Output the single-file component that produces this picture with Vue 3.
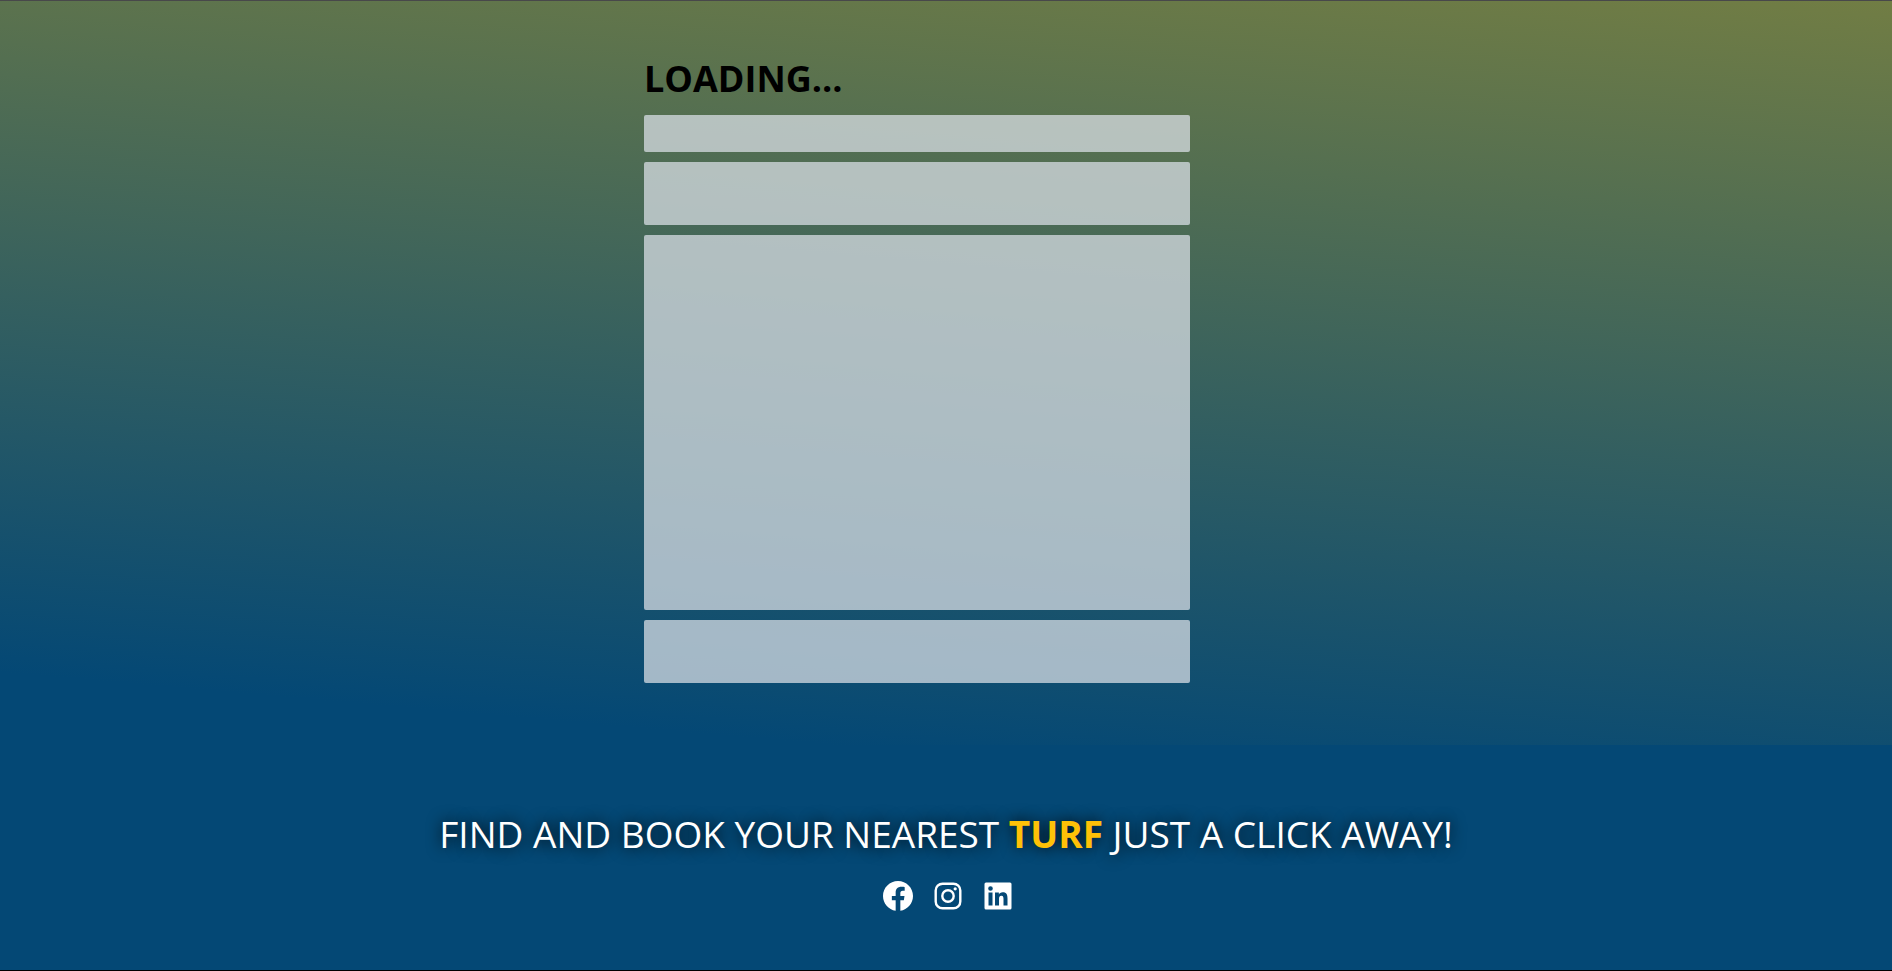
<script setup>
const blocks = ['title', 'field', 'picture', 'field']
</script>

<template>
  <div class="page">
    <main class="hero">
      <section class="loader" aria-busy="true">
        <h1>LOADING...</h1>
        <div v-for="(kind, i) in blocks" :key="i" class="block" :class="kind"></div>
      </section>
    </main>
    <footer class="footer">
      <p class="tagline">FIND AND BOOK YOUR NEAREST <strong>TURF</strong> JUST A CLICK AWAY!</p>
      <nav class="social" aria-label="Social media">
        <a href="#facebook" aria-label="Facebook">
          <svg viewBox="0 0 24 24"><path d="M12.001 2.002c-5.522 0-9.999 4.477-9.999 9.999 0 4.99 3.656 9.126 8.437 9.879v-6.988h-2.54v-2.891h2.54V9.798c0-2.508 1.493-3.891 3.776-3.891 1.094 0 2.24.195 2.24.195v2.459h-1.264c-1.24 0-1.628.772-1.628 1.563v1.875h2.771l-.443 2.891h-2.328v6.988C18.344 21.129 22 16.992 22 12.001c0-5.522-4.477-9.999-9.999-9.999z" /></svg>
        </a>
        <a href="#instagram" aria-label="Instagram">
          <svg viewBox="0 0 24 24">
            <rect x="3.8" y="3.8" width="16.4" height="16.4" rx="4.6" class="outline" />
            <circle cx="12" cy="12" r="3.8" class="outline" />
            <circle cx="16.8" cy="7.2" r="1.08" />
          </svg>
        </a>
        <a href="#linkedin" aria-label="LinkedIn">
          <svg viewBox="0 0 24 24"><path d="M20 3H4a1 1 0 0 0-1 1v16a1 1 0 0 0 1 1h16a1 1 0 0 0 1-1V4a1 1 0 0 0-1-1zM8.339 18.337H5.667v-8.59h2.672v8.59zM7.003 8.574a1.548 1.548 0 1 1 0-3.096 1.548 1.548 0 0 1 0 3.096zm11.335 9.763h-2.669V14.16c0-.996-.018-2.277-1.388-2.277-1.39 0-1.601 1.086-1.601 2.207v4.248h-2.667v-8.59h2.56v1.174h.037c.355-.675 1.227-1.387 2.524-1.387 2.704 0 3.203 1.778 3.203 4.092v4.71z" /></svg>
        </a>
      </nav>
    </footer>
  </div>
</template>

<style>
body {
  margin: 0;
  background: #044875;
}
</style>

<style scoped>
.page {
  display: flex;
  flex-direction: column;
  box-sizing: border-box;
  min-height: 100vh;
  border-top: 1px solid #48484a;
  border-bottom: 1px solid #000;
  background: #044875;
  font-family: "Segoe UI", "Open Sans", "Noto Sans", sans-serif;
}
.hero {
  padding: 52px 24px 62px;
  background: linear-gradient(5deg, #044875 8%, #717d44 100%);
}
.loader {
  display: flex;
  flex-direction: column;
  gap: 10px;
  box-sizing: border-box;
  max-width: 604px;
  margin: 0 auto;
  padding-right: 58px;
}
h1 {
  margin: 0;
  color: #000;
  font-size: 36px;
  font-weight: 700;
  line-height: 52px;
}
.block {
  height: 63px;
  border-radius: 2px;
  background: rgba(217, 223, 230, 0.74);
}
.title {
  height: 37px;
}
.picture {
  height: 375px;
}
.footer {
  padding: 64px 24px 0;
  text-align: center;
}
.tagline {
  margin: 0;
  color: #fff;
  font-size: 37px;
  line-height: 50px;
  text-shadow: 0 0 15px #000;
}
.tagline strong {
  color: #ffc107;
  font-weight: 700;
}
.social {
  display: flex;
  justify-content: center;
  gap: 14px;
  margin-top: 19px;
  padding-left: 4px;
}
.social a {
  display: flex;
  color: #fff;
}
.social svg {
  width: 36px;
  height: 36px;
  fill: currentColor;
}
.social .outline {
  fill: none;
  stroke: currentColor;
  stroke-width: 1.6;
}
</style>
